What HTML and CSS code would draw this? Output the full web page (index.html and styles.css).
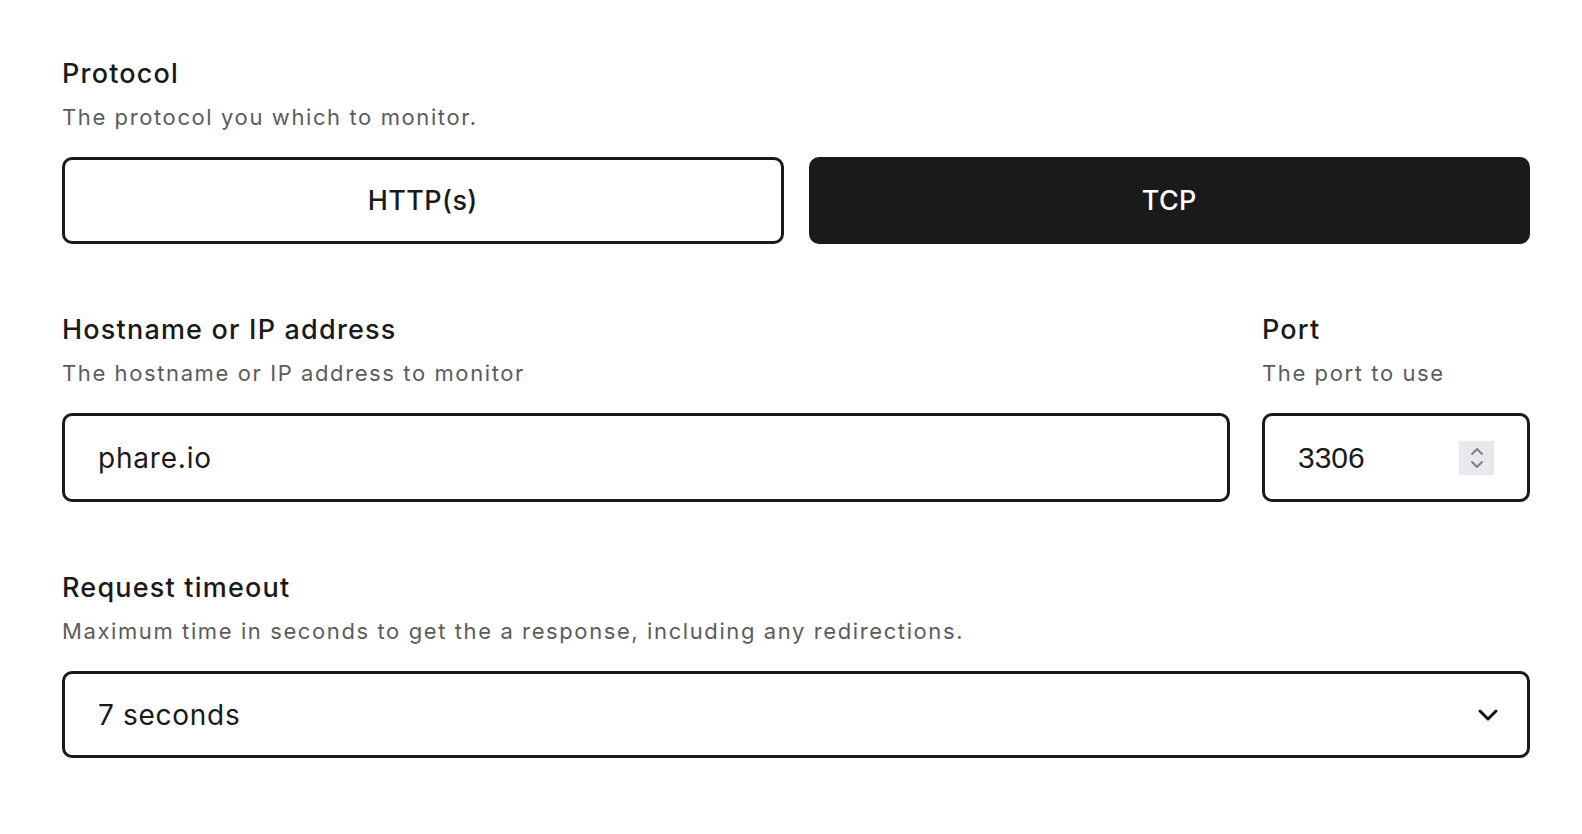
FILE: index.html
```html
<!DOCTYPE html>
<html lang="en">
<head>
    <meta charset="UTF-8">
    <meta name="viewport" content="width=device-width, initial-scale=1.0">
    <title>Monitor settings</title>
    <link rel="stylesheet" href="styles.css">
</head>
<body>
    <form class="monitorForm">
        <div class="field">
            <h3 class="label">Protocol</h3>
            <p class="hint">The protocol you which to monitor.</p>
            <div class="choices">
                <button type="button" class="choice">HTTP(s)</button>
                <button type="button" class="choice active">TCP</button>
            </div>
        </div>

        <div class="row">
            <div class="field grow">
                <h3 class="label">Hostname or IP address</h3>
                <p class="hint">The hostname or IP address to monitor</p>
                <div class="box">
                    <input type="text" class="textInput" value="phare.io">
                </div>
            </div>
            <div class="field port">
                <h3 class="label">Port</h3>
                <p class="hint">The port to use</p>
                <div class="box portBox">
                    <input type="text" class="portInput" value="3306">
                    <span class="spinner">
                        <svg width="16" height="30" viewBox="0 0 16 30" fill="none" stroke="#808080" stroke-width="2" stroke-linecap="round" stroke-linejoin="round">
                            <path d="M3 11 L8 6 L13 11"/>
                            <path d="M3 19 L8 24 L13 19"/>
                        </svg>
                    </span>
                </div>
            </div>
        </div>

        <div class="field">
            <h3 class="label">Request timeout</h3>
            <p class="hint">Maximum time in seconds to get the a response, including any redirections.</p>
            <div class="box selectBox">
                <span class="selectValue">7 seconds</span>
                <svg width="22" height="14" viewBox="0 0 22 14" fill="none" stroke="#111" stroke-width="3" stroke-linecap="round" stroke-linejoin="round">
                    <path d="M3 3 L11 11 L19 3"/>
                </svg>
            </div>
        </div>
    </form>
</body>
</html>
```

FILE: styles.css
```css
body {
    margin: 0;
    font-family: Inter, "Noto Sans", sans-serif;
    background-color: #ffffff;
    color: #1a1a1a;
}

.monitorForm {
    display: flex;
    flex-direction: column;
    gap: 68px;
    padding: 56px 52px 0 62px;
}

.field {
    display: flex;
    flex-direction: column;
}

.label {
    margin: 0;
    font-size: 27px;
    line-height: 36px;
    font-weight: 500;
    letter-spacing: 1.2px;
    color: #1a1a1a;
}

.hint {
    margin: 9px 0 24px;
    font-size: 22px;
    line-height: 32px;
    letter-spacing: 1.6px;
    color: #5c5c5c;
}

.choices {
    display: flex;
    gap: 25px;
}

.choice {
    flex: 1;
    height: 87px;
    border: 3px solid #1a1a1a;
    border-radius: 10px;
    background-color: #ffffff;
    color: #1a1a1a;
    font-family: inherit;
    font-size: 27px;
    font-weight: 500;
    letter-spacing: 0.4px;
    cursor: pointer;
}

.choice.active {
    background-color: #1a1a1a;
    color: #ffffff;
}

.row {
    display: flex;
    gap: 32px;
}

.grow {
    flex: 1;
}

.port {
    width: 268px;
}

.box {
    display: flex;
    align-items: center;
    height: 89px;
    box-sizing: border-box;
    border: 3px solid #1a1a1a;
    border-radius: 10px;
    padding: 0 33px;
}

.textInput {
    flex: 1;
    border: none;
    outline: none;
    padding: 0;
    font-family: inherit;
    font-size: 28px;
    letter-spacing: 0.8px;
    color: #1a1a1a;
    background: transparent;
}

.portInput {
    width: 100%;
    border: none;
    outline: none;
    padding: 0;
    font-family: "Liberation Sans", Arial, sans-serif;
    font-size: 30px;
    color: #1a1a1a;
    background: transparent;
}

.spinner {
    display: flex;
    align-items: center;
    justify-content: center;
    flex-shrink: 0;
    width: 35px;
    height: 34px;
    background-color: #e9e9ed;
}

.selectBox {
    height: 87px;
    justify-content: space-between;
    padding-right: 28px;
}

.selectValue {
    font-size: 28px;
    letter-spacing: 0.7px;
}
```
